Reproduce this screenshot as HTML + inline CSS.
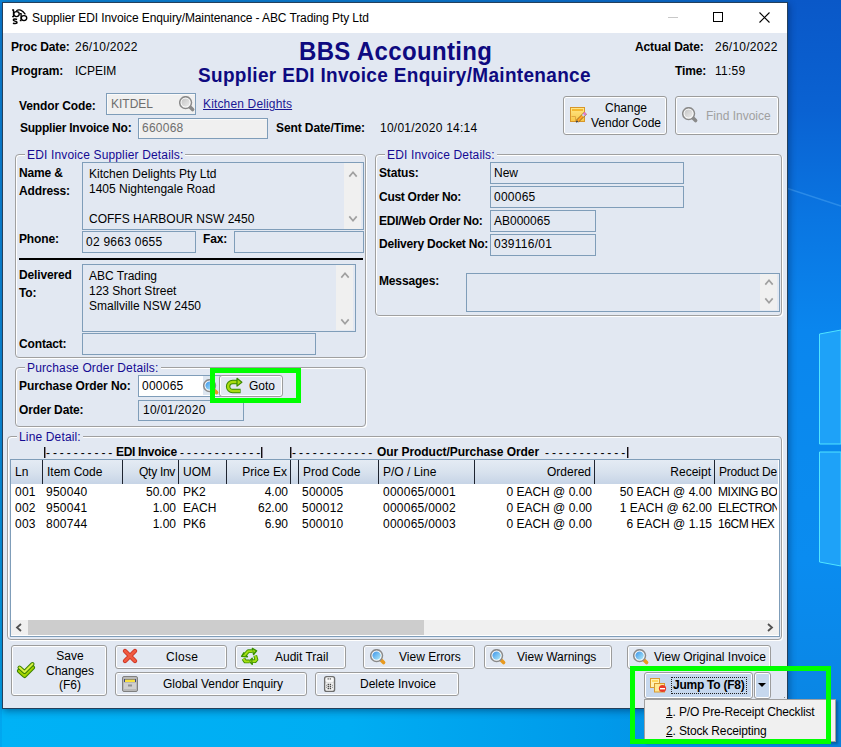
<!DOCTYPE html>
<html><head><meta charset="utf-8">
<style>
html,body{margin:0;padding:0;}
body{width:841px;height:747px;position:relative;overflow:hidden;font-family:"Liberation Sans",sans-serif;font-size:12px;color:#000;background:#0a78dc;}
.a{position:absolute;}
.t{position:absolute;white-space:pre;line-height:14px;font-size:12px;}
.box{position:absolute;box-sizing:border-box;border:1px solid #7f9db9;background:#e2e8f2;}
.dis{position:absolute;box-sizing:border-box;border:1px solid #7f9db9;background:#f0f0f0;box-shadow:inset 1px 1px 0 #fafafa;}
.wht{position:absolute;box-sizing:border-box;border:1px solid #7f9db9;background:#fff;}
.grp{position:absolute;box-sizing:border-box;border:1px solid #a0a0a0;border-radius:4px;box-shadow:inset 1px 1px 0 #fff,1px 1px 0 #fff;}
.btn{position:absolute;box-sizing:border-box;border:1px solid #9c9c9c;border-radius:3px;background:#e2e8f2;box-shadow:inset 0 0 0 1px #fff;}
.sbv{position:absolute;background:#f0f0f0;}
</style></head><body>

<div class="a" style="left:0px;top:0px;width:841px;height:747px;background:linear-gradient(180deg,#0a58c8 0px,#0a62d2 110px,#0a76e2 220px,#0a86ee 330px,#0a8aee 450px,#0a8cf0 560px,#0a88e8 660px,#0a84e0 747px);"></div>
<svg class="a" style="left:786px;top:180px;" width="55" height="40" viewBox="786 180 55 40"><path d="M786 188 L841 206" stroke="rgba(120,200,255,0.3)" stroke-width="1.5"/></svg>
<svg class="a" style="left:815px;top:325px;" width="26" height="250" viewBox="815 325 26 250"><path d="M819.5 334 L841 330 V444 H819.5 Z" fill="#1ea2f8" stroke="#50e4ff" stroke-width="1"/><path d="M819.5 452 H841 V566 L819.5 562 Z" fill="#1ea2f8" stroke="#50e4ff" stroke-width="1"/></svg>
<div class="a" style="left:0px;top:700px;width:841px;height:47px;background:linear-gradient(90deg,#00b2f6 0px,#00adf2 350px,#009aea 600px,#0a88e0 760px,#0a80dc 841px);"></div>
<div class="a" style="left:0px;top:0px;width:2px;height:747px;background:linear-gradient(180deg,#0a80d8 0%,#0a90e0 60%,#00a8f0 100%);"></div>
<div class="a" style="left:0px;top:0px;width:790px;height:2px;background:linear-gradient(90deg,#0a84d4 0px,#0a78cc 400px,#0a62c6 790px);"></div>
<div class="a" style="left:2px;top:2px;width:786px;height:707px;box-sizing:border-box;border:1px solid #24405c;background:#e2e8f2;box-shadow:1px 2px 7px 0 rgba(0,20,60,0.45);"></div>
<div class="a" style="left:3px;top:3px;width:784px;height:30px;background:#fff;"></div>
<div class="t" style="left:32px;top:11px;letter-spacing:-0.11px;">Supplier EDI Invoice Enquiry/Maintenance - ABC Trading Pty Ltd</div>
<svg class="a" style="left:8px;top:6px;" width="24" height="22" viewBox="8 6 24 22"><g fill="none" stroke="#000" stroke-width="1.35"><path d="M13.5 9.9 V16.6 M12.1 10 H14.1 M12.1 16.6 H14"/><ellipse cx="16.5" cy="14.1" rx="2.75" ry="2.45"/><path d="M17.1 19.5 Q15.2 18.7 13.7 19.3 Q12.7 20.5 14.9 21.1 Q17.3 21.7 16.9 23.0 Q15.7 24.0 12.9 23.2" stroke-width="1.5"/><path d="M21.1 13.5 V20.6 M19.8 13.6 H21.6 M19.8 20.6 H21.5"/><ellipse cx="24.0" cy="18.1" rx="2.75" ry="2.45"/><path d="M16.3 10.8 Q20.5 7.6 25.4 14.4" stroke-width="1.2"/></g></svg>
<div class="a" style="left:668px;top:17px;width:10px;height:1px;background:#c8c8c8;"></div>
<div class="a" style="left:713px;top:12px;width:10px;height:10px;box-sizing:border-box;border:1px solid #000;"></div>
<svg class="a" style="left:759px;top:12px;" width="11" height="11" viewBox="759 12 11 11"><path d="M759.5 12.5 L769.5 22.5 M769.5 12.5 L759.5 22.5" stroke="#000" stroke-width="1.1"/></svg>
<div class="t" style="left:11px;top:40px;font-weight:bold;letter-spacing:-0.15px;">Proc Date:</div>
<div class="t" style="left:75px;top:40px;letter-spacing:0.25px;">26/10/2022</div>
<div class="t" style="left:11px;top:64px;font-weight:bold;letter-spacing:-0.15px;">Program:</div>
<div class="t" style="left:75px;top:64px;">ICPEIM</div>
<div class="t" style="left:299px;top:38px;font-size:24px;line-height:28px;font-weight:bold;color:#0e0a80;letter-spacing:0.35px;transform:scaleY(1.07);transform-origin:0 22px;">BBS Accounting</div>
<div class="t" style="left:198px;top:64.6px;font-size:19px;line-height:22px;font-weight:bold;color:#0e0a80;letter-spacing:0.32px;transform:scaleY(1.05);transform-origin:0 17px;">Supplier EDI Invoice Enquiry/Maintenance</div>
<div class="t" style="left:635px;top:40px;font-weight:bold;letter-spacing:-0.15px;letter-spacing:-0.12px;">Actual Date:</div>
<div class="t" style="left:715px;top:40px;letter-spacing:0.25px;">26/10/2022</div>
<div class="t" style="left:675px;top:64px;font-weight:bold;letter-spacing:-0.15px;">Time:</div>
<div class="t" style="left:715px;top:64px;letter-spacing:0.25px;">11:59</div>
<div class="t" style="left:19px;top:99px;font-weight:bold;letter-spacing:-0.15px;letter-spacing:-0.12px;">Vendor Code:</div>
<div class="dis" style="left:106px;top:93px;width:90px;height:22px;"></div>
<div class="t" style="left:111px;top:97px;color:#6e6e6e;">KITDEL</div>
<svg class="a" style="left:179px;top:96px;" width="17" height="17" viewBox="0 0 17 17"><defs><linearGradient id="mgg" x1="0" y1="0" x2="1" y2="1"><stop offset="0" stop-color="#c4c4c4"/><stop offset="1" stop-color="#ececec"/></linearGradient></defs><path d="M11 11 L13.6 13.6" stroke="#8a8a8a" stroke-width="3.6" stroke-linecap="round"/><circle cx="6.6" cy="6.6" r="5.9" fill="#fff" stroke="#8a8a8a" stroke-width="1.5"/><circle cx="6.6" cy="6.6" r="4.1" fill="url(#mgg)"/></svg>
<div class="t" style="left:203px;top:97px;color:#1a1894;text-decoration:underline;letter-spacing:0.15px;">Kitchen Delights</div>
<div class="t" style="left:20px;top:121px;font-weight:bold;letter-spacing:-0.15px;letter-spacing:-0.23px;">Supplier Invoice No:</div>
<div class="dis" style="left:138px;top:118px;width:130px;height:21px;"></div>
<div class="t" style="left:142px;top:121px;letter-spacing:0.25px;color:#6e6e6e;">660068</div>
<div class="t" style="left:276px;top:121px;font-weight:bold;letter-spacing:-0.15px;letter-spacing:-0.1px;">Sent Date/Time:</div>
<div class="t" style="left:380px;top:121px;letter-spacing:0.25px;">10/01/2020 14:14</div>
<div class="btn" style="left:563px;top:96px;width:104px;height:39px;"></div>
<div class="t" style="left:526px;width:200px;text-align:center;top:101px;">Change</div>
<div class="t" style="left:526px;width:200px;text-align:center;top:116px;">Vendor Code</div>
<svg class="a" style="left:569px;top:106px;" width="18" height="18" viewBox="569 106 18 18"><defs><linearGradient id="ng" x1="0" y1="0" x2="0" y2="1"><stop offset="0" stop-color="#ffe88a"/><stop offset="1" stop-color="#f8c848"/></linearGradient></defs><rect x="570.5" y="107.5" width="14" height="14" fill="url(#ng)" stroke="#d8962a" stroke-width="1"/><rect x="572" y="109" width="11" height="2" fill="#f4b830"/><path d="M571.5 116.5 H575.5 V121" fill="none" stroke="#e0a840" stroke-width="1"/><path d="M577.3 121.2 L585.6 112.9" stroke="#9a6a28" stroke-width="3.6"/><path d="M577.3 121.2 L583.2 115.3" stroke="#ffa424" stroke-width="2.2"/><path d="M582.6 115.9 L584.2 114.3" stroke="#c8d8f0" stroke-width="2.4"/><path d="M584 114.5 L585.5 113" stroke="#e878d8" stroke-width="2.6"/><path d="M576.2 122.3 L577.6 120.9" stroke="#404040" stroke-width="1.6"/></svg>
<div class="btn" style="left:675px;top:96px;width:104px;height:39px;"></div>
<svg class="a" style="left:682px;top:107px;" width="17" height="17" viewBox="0 0 17 17"><defs><linearGradient id="mgg" x1="0" y1="0" x2="1" y2="1"><stop offset="0" stop-color="#c4c4c4"/><stop offset="1" stop-color="#ececec"/></linearGradient></defs><path d="M11 11 L13.6 13.6" stroke="#8a8a8a" stroke-width="3.6" stroke-linecap="round"/><circle cx="6.6" cy="6.6" r="5.9" fill="#fff" stroke="#8a8a8a" stroke-width="1.5"/><circle cx="6.6" cy="6.6" r="4.1" fill="url(#mgg)"/></svg>
<div class="t" style="left:706px;top:109px;color:#a0a0a0;">Find Invoice</div>
<div class="grp" style="left:15px;top:154px;width:351px;height:204px;"></div>
<div class="t" style="left:25px;top:148px;color:#150a92;background:#e2e8f2;padding:0 2px;letter-spacing:0.15px;">EDI Invoice Supplier Details:</div>
<div class="t" style="left:19px;top:166px;font-weight:bold;letter-spacing:-0.15px;">Name &amp;</div>
<div class="t" style="left:19px;top:184px;font-weight:bold;letter-spacing:-0.15px;">Address:</div>
<div class="box" style="left:82px;top:162px;width:282px;height:68px;"></div>
<div class="a" style="left:344px;top:163px;width:17px;height:66px;background:#f0f0f0;"></div>
<svg class="a" style="left:348px;top:170px;" width="10" height="8" viewBox="348 170 10 8"><path d="M349.3 176.6 L353 172.2 L356.7 176.6" fill="none" stroke="#a0a0a0" stroke-width="1.7"/></svg>
<svg class="a" style="left:348px;top:215px;" width="10" height="8" viewBox="348 215 10 8"><path d="M349.3 216.4 L353 220.8 L356.7 216.4" fill="none" stroke="#a0a0a0" stroke-width="1.7"/></svg>
<div class="t" style="left:89px;top:167px;">Kitchen Delights Pty Ltd</div>
<div class="t" style="left:89px;top:182px;">1405 Nightengale Road</div>
<div class="t" style="left:89px;top:212px;">COFFS HARBOUR NSW 2450</div>
<div class="t" style="left:19px;top:232px;font-weight:bold;letter-spacing:-0.15px;">Phone:</div>
<div class="box" style="left:82px;top:231px;width:114px;height:22px;"></div>
<div class="t" style="left:86px;top:235px;letter-spacing:0.25px;">02 9663 0655</div>
<div class="t" style="left:203px;top:232px;font-weight:bold;letter-spacing:-0.15px;">Fax:</div>
<div class="box" style="left:234px;top:231px;width:130px;height:22px;"></div>
<div class="a" style="left:19px;top:258px;width:344px;height:2px;background:#000;"></div>
<div class="t" style="left:19px;top:268px;font-weight:bold;letter-spacing:-0.15px;">Delivered</div>
<div class="t" style="left:19px;top:286px;font-weight:bold;letter-spacing:-0.15px;">To:</div>
<div class="box" style="left:82px;top:264px;width:274px;height:68px;"></div>
<div class="a" style="left:336px;top:265px;width:17px;height:65px;background:#f0f0f0;"></div>
<svg class="a" style="left:340px;top:271px;" width="10" height="8" viewBox="340 271 10 8"><path d="M341.3 277.6 L345 273.2 L348.7 277.6" fill="none" stroke="#a0a0a0" stroke-width="1.7"/></svg>
<svg class="a" style="left:340px;top:318px;" width="10" height="8" viewBox="340 318 10 8"><path d="M341.3 319.4 L345 323.8 L348.7 319.4" fill="none" stroke="#a0a0a0" stroke-width="1.7"/></svg>
<div class="t" style="left:89px;top:269px;">ABC Trading</div>
<div class="t" style="left:89px;top:284px;">123 Short Street</div>
<div class="t" style="left:89px;top:299px;">Smallville NSW 2450</div>
<div class="t" style="left:19px;top:337px;font-weight:bold;letter-spacing:-0.15px;">Contact:</div>
<div class="box" style="left:82px;top:333px;width:234px;height:22px;"></div>
<div class="grp" style="left:15px;top:367px;width:351px;height:60px;"></div>
<div class="t" style="left:25px;top:361px;color:#150a92;background:#e2e8f2;padding:0 2px;letter-spacing:0.15px;">Purchase Order Details:</div>
<div class="t" style="left:19px;top:379px;font-weight:bold;letter-spacing:-0.15px;letter-spacing:-0.1px;">Purchase Order No:</div>
<div class="wht" style="left:138px;top:375px;width:85px;height:22px;"></div>
<div class="a" style="left:203px;top:376px;width:18px;height:19px;background:#dde6f0;"></div>
<svg class="a" style="left:203px;top:379px;" width="17" height="17" viewBox="0 0 17 17"><defs><linearGradient id="mg" x1="0" y1="0" x2="1" y2="1"><stop offset="0" stop-color="#3a92e8"/><stop offset="1" stop-color="#b4eefa"/></linearGradient></defs><path d="M11 11 L13.6 13.6" stroke="#e89a20" stroke-width="3.6" stroke-linecap="round"/><circle cx="6.6" cy="6.6" r="5.9" fill="#fff" stroke="#8a8a8a" stroke-width="1.5"/><circle cx="6.6" cy="6.6" r="4.2" fill="url(#mg)"/></svg>
<div class="t" style="left:142px;top:379px;letter-spacing:0.25px;">000065</div>
<div class="t" style="left:19px;top:403px;font-weight:bold;letter-spacing:-0.15px;">Order Date:</div>
<div class="box" style="left:138px;top:400px;width:106px;height:21px;"></div>
<div class="t" style="left:143px;top:403px;letter-spacing:0.25px;">10/01/2020</div>
<div class="btn" style="left:219px;top:375px;width:64px;height:22px;"></div>
<svg class="a" style="left:222px;top:375px;" width="22" height="22" viewBox="222 375 22 22"><path d="M240.6 391 H232.6 A4.5 4.5 0 0 1 232.6 382 H237.5" fill="none" stroke="#3a8a00" stroke-width="4.4"/><path d="M240 391 H232.6 A4.5 4.5 0 0 1 232.6 382 H237.5" fill="none" stroke="#a8dc10" stroke-width="2.4"/><path d="M237 378.3 L241.9 382.2 L237 386.1 Z" fill="#a8dc10" stroke="#3a8a00" stroke-width="1.2" stroke-linejoin="round"/></svg>
<div class="t" style="left:249px;top:379px;">Goto</div>
<div class="a" style="left:210px;top:368px;width:91px;height:35px;box-sizing:border-box;border:5px solid #00ff00;"></div>
<div class="grp" style="left:375px;top:154px;width:407px;height:162px;"></div>
<div class="t" style="left:385px;top:148px;color:#150a92;background:#e2e8f2;padding:0 2px;letter-spacing:0.15px;">EDI Invoice Details:</div>
<div class="t" style="left:379px;top:166px;font-weight:bold;letter-spacing:-0.15px;">Status:</div>
<div class="box" style="left:490px;top:162px;width:194px;height:22px;"></div>
<div class="t" style="left:494px;top:166px;">New</div>
<div class="t" style="left:379px;top:190px;font-weight:bold;letter-spacing:-0.15px;letter-spacing:-0.28px;">Cust Order No:</div>
<div class="box" style="left:490px;top:186px;width:194px;height:22px;"></div>
<div class="t" style="left:494px;top:190px;letter-spacing:0.25px;">000065</div>
<div class="t" style="left:379px;top:214px;font-weight:bold;letter-spacing:-0.15px;letter-spacing:-0.25px;">EDI/Web Order No:</div>
<div class="box" style="left:490px;top:210px;width:106px;height:22px;"></div>
<div class="t" style="left:494px;top:214px;">AB000065</div>
<div class="t" style="left:379px;top:237px;font-weight:bold;letter-spacing:-0.15px;letter-spacing:-0.23px;">Delivery Docket No:</div>
<div class="box" style="left:490px;top:234px;width:106px;height:22px;"></div>
<div class="t" style="left:494px;top:237px;letter-spacing:0.25px;">039116/01</div>
<div class="t" style="left:379px;top:274px;font-weight:bold;letter-spacing:-0.15px;">Messages:</div>
<div class="box" style="left:466px;top:273px;width:314px;height:39px;"></div>
<div class="a" style="left:760px;top:274px;width:17px;height:36px;background:#f0f0f0;"></div>
<svg class="a" style="left:764px;top:278px;" width="10" height="8" viewBox="764 278 10 8"><path d="M765.3 284.6 L769 280.2 L772.7 284.6" fill="none" stroke="#a0a0a0" stroke-width="1.7"/></svg>
<svg class="a" style="left:764px;top:297px;" width="10" height="8" viewBox="764 297 10 8"><path d="M765.3 298.4 L769 302.8 L772.7 298.4" fill="none" stroke="#a0a0a0" stroke-width="1.7"/></svg>
<div class="grp" style="left:7px;top:436px;width:775px;height:204px;"></div>
<div class="t" style="left:17px;top:430px;color:#150a92;background:#e2e8f2;padding:0 2px;letter-spacing:0.15px;">Line Detail:</div>
<div class="a" style="left:44px;top:447px;width:1px;height:11px;background:#101010;"></div>
<div class="a" style="left:45px;top:447px;width:1px;height:11px;background:#8c8494;"></div>
<div class="t" style="left:46px;top:446px;letter-spacing:-0.2px;">- - - - - - - - - -</div>
<div class="t" style="left:116px;top:445px;font-weight:bold;letter-spacing:-0.15px;letter-spacing:-0.36px;">EDI Invoice</div>
<div class="t" style="left:180px;top:446px;letter-spacing:-0.2px;">- - - - - - - - - - - -</div>
<div class="a" style="left:261px;top:447px;width:1px;height:11px;background:#101010;"></div>
<div class="a" style="left:262px;top:447px;width:1px;height:11px;background:#8c8494;"></div>
<div class="a" style="left:290px;top:447px;width:1px;height:11px;background:#101010;"></div>
<div class="a" style="left:291px;top:447px;width:1px;height:11px;background:#8c8494;"></div>
<div class="t" style="left:292px;top:446px;letter-spacing:-0.2px;">- - - - - - - - - - - -</div>
<div class="t" style="left:377px;top:445px;font-weight:bold;letter-spacing:-0.15px;letter-spacing:-0.05px;">Our Product/Purchase Order</div>
<div class="t" style="left:545px;top:446px;letter-spacing:-0.2px;">- - - - - - - - - - - -</div>
<div class="a" style="left:627px;top:447px;width:1px;height:11px;background:#101010;"></div>
<div class="a" style="left:628px;top:447px;width:1px;height:11px;background:#8c8494;"></div>
<div class="a" style="left:10px;top:459px;width:770px;height:178px;box-sizing:border-box;border:1px solid #7f9db9;background:#fff;"></div>
<div class="a" style="left:11px;top:460px;width:767px;height:24px;background:linear-gradient(180deg,#e4ebf4 0%,#d8e2ee 50%,#c6d4e6 100%);"></div>
<div class="a" style="left:42px;top:460px;width:1px;height:24px;background:#1e2430;"></div>
<div class="a" style="left:122px;top:460px;width:1px;height:24px;background:#1e2430;"></div>
<div class="a" style="left:178px;top:460px;width:1px;height:24px;background:#1e2430;"></div>
<div class="a" style="left:226px;top:460px;width:1px;height:24px;background:#1e2430;"></div>
<div class="a" style="left:290px;top:460px;width:1px;height:24px;background:#1e2430;"></div>
<div class="a" style="left:298px;top:460px;width:1px;height:24px;background:#1e2430;"></div>
<div class="a" style="left:378px;top:460px;width:1px;height:24px;background:#1e2430;"></div>
<div class="a" style="left:474px;top:460px;width:1px;height:24px;background:#1e2430;"></div>
<div class="a" style="left:594px;top:460px;width:1px;height:24px;background:#1e2430;"></div>
<div class="a" style="left:714px;top:460px;width:1px;height:24px;background:#1e2430;"></div>
<div class="t" style="left:15px;top:465px;">Ln</div>
<div class="t" style="left:47px;top:465px;">Item Code</div>
<div class="t" style="right:666px;top:465px;letter-spacing:-0.3px;">Qty Inv</div>
<div class="t" style="left:183px;top:465px;">UOM</div>
<div class="t" style="right:554px;top:465px;">Price Ex</div>
<div class="t" style="left:303px;top:465px;">Prod Code</div>
<div class="t" style="left:383px;top:465px;">P/O / Line</div>
<div class="t" style="right:250px;top:465px;">Ordered</div>
<div class="t" style="right:130px;top:465px;">Receipt</div>
<div class="a" style="left:715px;top:460px;width:62px;height:24px;overflow:hidden;"><div class="t" style="left:4px;top:5px;letter-spacing:-0.2px;">Product Description</div></div>
<div class="t" style="left:15px;top:485px;letter-spacing:0.25px;">001</div>
<div class="t" style="left:46px;top:485px;letter-spacing:0.25px;">950040</div>
<div class="t" style="right:665px;top:485px;">50.00</div>
<div class="t" style="left:183px;top:485px;">PK2</div>
<div class="t" style="right:553px;top:485px;">4.00</div>
<div class="t" style="left:302px;top:485px;letter-spacing:0.25px;">500005</div>
<div class="t" style="left:383px;top:485px;letter-spacing:0.25px;">000065/0001</div>
<div class="t" style="right:249px;top:485px;">0 EACH @ 0.00</div>
<div class="t" style="right:129px;top:485px;">50 EACH @ 4.00</div>
<div class="a" style="left:715px;top:485px;width:62px;height:14px;overflow:hidden;"><div class="t" style="left:3px;top:0;letter-spacing:-0.45px;">MIXING BOWL</div></div>
<div class="t" style="left:15px;top:501px;letter-spacing:0.25px;">002</div>
<div class="t" style="left:46px;top:501px;letter-spacing:0.25px;">950041</div>
<div class="t" style="right:665px;top:501px;">1.00</div>
<div class="t" style="left:183px;top:501px;">EACH</div>
<div class="t" style="right:553px;top:501px;">62.00</div>
<div class="t" style="left:302px;top:501px;letter-spacing:0.25px;">500012</div>
<div class="t" style="left:383px;top:501px;letter-spacing:0.25px;">000065/0002</div>
<div class="t" style="right:249px;top:501px;">0 EACH @ 0.00</div>
<div class="t" style="right:129px;top:501px;">1 EACH @ 62.00</div>
<div class="a" style="left:715px;top:501px;width:62px;height:14px;overflow:hidden;"><div class="t" style="left:3px;top:0;letter-spacing:-0.45px;">ELECTRONIC</div></div>
<div class="t" style="left:15px;top:517px;letter-spacing:0.25px;">003</div>
<div class="t" style="left:46px;top:517px;letter-spacing:0.25px;">800744</div>
<div class="t" style="right:665px;top:517px;">1.00</div>
<div class="t" style="left:183px;top:517px;">PK6</div>
<div class="t" style="right:553px;top:517px;">6.90</div>
<div class="t" style="left:302px;top:517px;letter-spacing:0.25px;">500010</div>
<div class="t" style="left:383px;top:517px;letter-spacing:0.25px;">000065/0003</div>
<div class="t" style="right:249px;top:517px;">0 EACH @ 0.00</div>
<div class="t" style="right:129px;top:517px;">6 EACH @ 1.15</div>
<div class="a" style="left:715px;top:517px;width:62px;height:14px;overflow:hidden;"><div class="t" style="left:3px;top:0;letter-spacing:-0.45px;">16CM HEX</div></div>
<div class="a" style="left:11px;top:620px;width:768px;height:15px;background:#f0f0f0;"></div>
<div class="a" style="left:28px;top:620px;width:396px;height:15px;background:#cdcdcd;"></div>
<svg class="a" style="left:14px;top:622px;" width="10" height="11" viewBox="14 622 10 11"><path d="M21 624 L17 627.5 L21 631" stroke="#505050" stroke-width="1.8" fill="none"/></svg>
<svg class="a" style="left:766px;top:622px;" width="10" height="11" viewBox="766 622 10 11"><path d="M768 624 L772 627.5 L768 631" stroke="#505050" stroke-width="1.8" fill="none"/></svg>
<div class="btn" style="left:11px;top:645px;width:96px;height:51px;"></div>
<div class="t" style="left:-30px;width:200px;text-align:center;top:649px;">Save</div>
<div class="t" style="left:-30px;width:200px;text-align:center;top:664px;">Changes</div>
<div class="t" style="left:-30px;width:200px;text-align:center;top:678px;">(F6)</div>
<svg class="a" style="left:16px;top:660px;" width="22" height="20" viewBox="16 660 22 20"><path d="M19.5 671 L24.5 675.5 L32.5 667.5" fill="none" stroke="#3a8000" stroke-width="5" stroke-linejoin="round" stroke-linecap="round"/><path d="M19.5 671 L24.5 675.5 L32.5 667.5" fill="none" stroke="#a4d400" stroke-width="3" stroke-linejoin="round" stroke-linecap="round"/><path d="M19.5 667.5 L24.5 672 L32.5 664" fill="none" stroke="#3a8000" stroke-width="4" stroke-linejoin="round" stroke-linecap="round"/><path d="M19.5 667.5 L24.5 672 L32.5 664" fill="none" stroke="#d8f040" stroke-width="2" stroke-linejoin="round" stroke-linecap="round"/></svg>
<div class="btn" style="left:115px;top:645px;width:112px;height:24px;"></div>
<div class="t" style="left:166px;top:650px;letter-spacing:0.3px;">Close</div>
<svg class="a" style="left:121px;top:647px;" width="18" height="18" viewBox="121 647 18 18"><path d="M125 651 L135 661 M135 651 L125 661" stroke="#c83020" stroke-width="4.4" stroke-linecap="round"/><path d="M125 651 L135 661 M135 651 L125 661" stroke="#f05a40" stroke-width="2.8" stroke-linecap="round"/></svg>
<div class="btn" style="left:235px;top:645px;width:111px;height:24px;"></div>
<div class="t" style="left:275px;top:650px;">Audit Trail</div>
<svg class="a" style="left:240px;top:647px;" width="20" height="20" viewBox="240 647 20 20"><g fill="none" stroke="#3a9000" stroke-width="3.8" stroke-linejoin="round"><path d="M244.8 655 L248.2 651.2 H252.6"/><path d="M255.2 655.6 L256.4 659.6 L255 661.2 H252.4"/><path d="M249.6 661.4 H245.2 L243.4 658.6"/></g><g fill="#3a9000" stroke="#3a9000" stroke-width="1.4" stroke-linejoin="round"><path d="M252.4 648.4 L256.6 650.8 L253.6 654.6 Z"/><path d="M252.2 658.2 L252.2 664.4 L249.4 661.3 Z"/><path d="M241.6 656.4 L243.8 652.8 L247.4 656.8 Z"/></g><g fill="none" stroke="#a6e014" stroke-width="2" stroke-linejoin="round"><path d="M244.8 655 L248.2 651.2 H252.6"/><path d="M255.2 655.6 L256.4 659.6 L255 661.2 H252.4"/><path d="M249.6 661.4 H245.2 L243.4 658.6"/></g><g fill="#a6e014"><path d="M253 649.6 L255.4 651 L253.7 653.1 Z"/><path d="M251.4 659.6 L251.4 663 L250 661.3 Z"/><path d="M242.9 656 L244 654.2 L246 656.3 Z"/></g></svg>
<div class="btn" style="left:363px;top:645px;width:112px;height:24px;"></div>
<svg class="a" style="left:370px;top:649px;" width="17" height="17" viewBox="0 0 17 17"><defs><linearGradient id="mg" x1="0" y1="0" x2="1" y2="1"><stop offset="0" stop-color="#3a92e8"/><stop offset="1" stop-color="#b4eefa"/></linearGradient></defs><path d="M11 11 L13.6 13.6" stroke="#e89a20" stroke-width="3.6" stroke-linecap="round"/><circle cx="6.6" cy="6.6" r="5.9" fill="#fff" stroke="#8a8a8a" stroke-width="1.5"/><circle cx="6.6" cy="6.6" r="4.2" fill="url(#mg)"/></svg>
<div class="t" style="left:399px;top:650px;">View Errors</div>
<div class="btn" style="left:484px;top:645px;width:128px;height:24px;"></div>
<svg class="a" style="left:490px;top:649px;" width="17" height="17" viewBox="0 0 17 17"><defs><linearGradient id="mg" x1="0" y1="0" x2="1" y2="1"><stop offset="0" stop-color="#3a92e8"/><stop offset="1" stop-color="#b4eefa"/></linearGradient></defs><path d="M11 11 L13.6 13.6" stroke="#e89a20" stroke-width="3.6" stroke-linecap="round"/><circle cx="6.6" cy="6.6" r="5.9" fill="#fff" stroke="#8a8a8a" stroke-width="1.5"/><circle cx="6.6" cy="6.6" r="4.2" fill="url(#mg)"/></svg>
<div class="t" style="left:517px;top:650px;">View Warnings</div>
<div class="btn" style="left:627px;top:645px;width:144px;height:24px;"></div>
<svg class="a" style="left:633px;top:649px;" width="17" height="17" viewBox="0 0 17 17"><defs><linearGradient id="mg" x1="0" y1="0" x2="1" y2="1"><stop offset="0" stop-color="#3a92e8"/><stop offset="1" stop-color="#b4eefa"/></linearGradient></defs><path d="M11 11 L13.6 13.6" stroke="#e89a20" stroke-width="3.6" stroke-linecap="round"/><circle cx="6.6" cy="6.6" r="5.9" fill="#fff" stroke="#8a8a8a" stroke-width="1.5"/><circle cx="6.6" cy="6.6" r="4.2" fill="url(#mg)"/></svg>
<div class="t" style="left:654px;top:650px;">View Original Invoice</div>
<div class="btn" style="left:115px;top:672px;width:192px;height:24px;"></div>
<div class="t" style="left:163px;top:677px;">Global Vendor Enquiry</div>
<svg class="a" style="left:120px;top:674px;" width="20" height="20" viewBox="120 674 20 20"><rect x="122.5" y="676.5" width="15" height="15" rx="1.5" fill="#b8b8b8" stroke="#808080"/><rect x="124" y="679" width="12" height="3" fill="#404880"/><rect x="125" y="679.5" width="10" height="2.5" fill="#f8e040"/><rect x="124" y="683" width="12" height="6" fill="#cfcfcf"/><rect x="128" y="684.5" width="4" height="2" fill="#909090"/></svg>
<div class="btn" style="left:315px;top:672px;width:144px;height:24px;"></div>
<div class="t" style="left:360px;top:677px;">Delete Invoice</div>
<svg class="a" style="left:322px;top:674px;" width="16" height="20" viewBox="322 674 16 20"><rect x="324.6" y="676.6" width="10" height="14.8" rx="2" fill="#d4d4d4" stroke="#6e6e6e" stroke-width="1.3"/><rect x="325.6" y="677.6" width="8" height="4.4" rx="1.5" fill="#f8f8f8"/><rect x="325.6" y="682.6" width="8" height="7.8" rx="1.5" fill="#f0f0f0"/><g fill="#4a4a4a"><rect x="327.6" y="678.3" width="1.2" height="1.2"/><rect x="329.7" y="678.3" width="1.2" height="1.2"/><rect x="327.6" y="683.8" width="1.4" height="1.4"/><rect x="329.7" y="683.8" width="1.4" height="1.4"/><rect x="327.6" y="685.8" width="1.4" height="1.4"/><rect x="329.7" y="685.8" width="1.4" height="1.4"/><rect x="327.6" y="687.8" width="1.4" height="1.4"/><rect x="329.7" y="687.8" width="1.4" height="1.4"/></g><g fill="#909090"><rect x="326" y="684.8" width="1" height="1"/><rect x="332" y="684.8" width="1" height="1"/><rect x="326" y="686.8" width="1" height="1"/><rect x="332" y="686.8" width="1" height="1"/></g></svg>
<div class="btn" style="left:644px;top:672px;width:109px;height:27px;background:#c6d8ee;"></div>
<svg class="a" style="left:648px;top:675px;" width="22" height="20" viewBox="648 675 22 20"><rect x="650.5" y="678.5" width="9" height="9" fill="#fff0b0" stroke="#d89a30"/><rect x="652" y="680" width="6" height="2" fill="#ffd860"/><rect x="654.5" y="683.5" width="10" height="8.5" fill="#ffe890" stroke="#d89a30"/><circle cx="662.5" cy="688.5" r="3.6" fill="#e83a28"/><rect x="660" y="688" width="5" height="1.4" fill="#fff"/></svg>
<div class="t" style="left:673px;top:678px;font-weight:bold;letter-spacing:-0.15px;letter-spacing:-0.25px;">Jump To (F8)</div>
<div class="a" style="left:671px;top:677px;width:76px;height:17px;box-sizing:border-box;border:1px dotted #222;"></div>
<div class="btn" style="left:754px;top:672px;width:17px;height:27px;background:#c6d8ee;"></div>
<svg class="a" style="left:757px;top:682px;" width="10" height="6" viewBox="757 682 10 6"><path d="M758 683 L766 683 L762 687 Z" fill="#000"/></svg>
<div class="a" style="left:784px;top:697px;width:1px;height:1px;background:#888;"></div>
<div class="a" style="left:644px;top:699px;width:192px;height:43px;box-sizing:border-box;border:1px solid #a0a0a0;background:#f0f0f0;box-shadow:2px 2px 2px rgba(0,0,0,0.25);"></div>
<div class="t" style="left:666px;top:705px;letter-spacing:-0.15px;"><u>1</u>. P/O Pre-Receipt Checklist</div>
<div class="t" style="left:666px;top:724px;letter-spacing:-0.15px;"><u>2</u>. Stock Receipting</div>
<div class="a" style="left:630px;top:666px;width:201px;height:78px;box-sizing:border-box;border:5px solid #00ff00;"></div>
</body></html>
